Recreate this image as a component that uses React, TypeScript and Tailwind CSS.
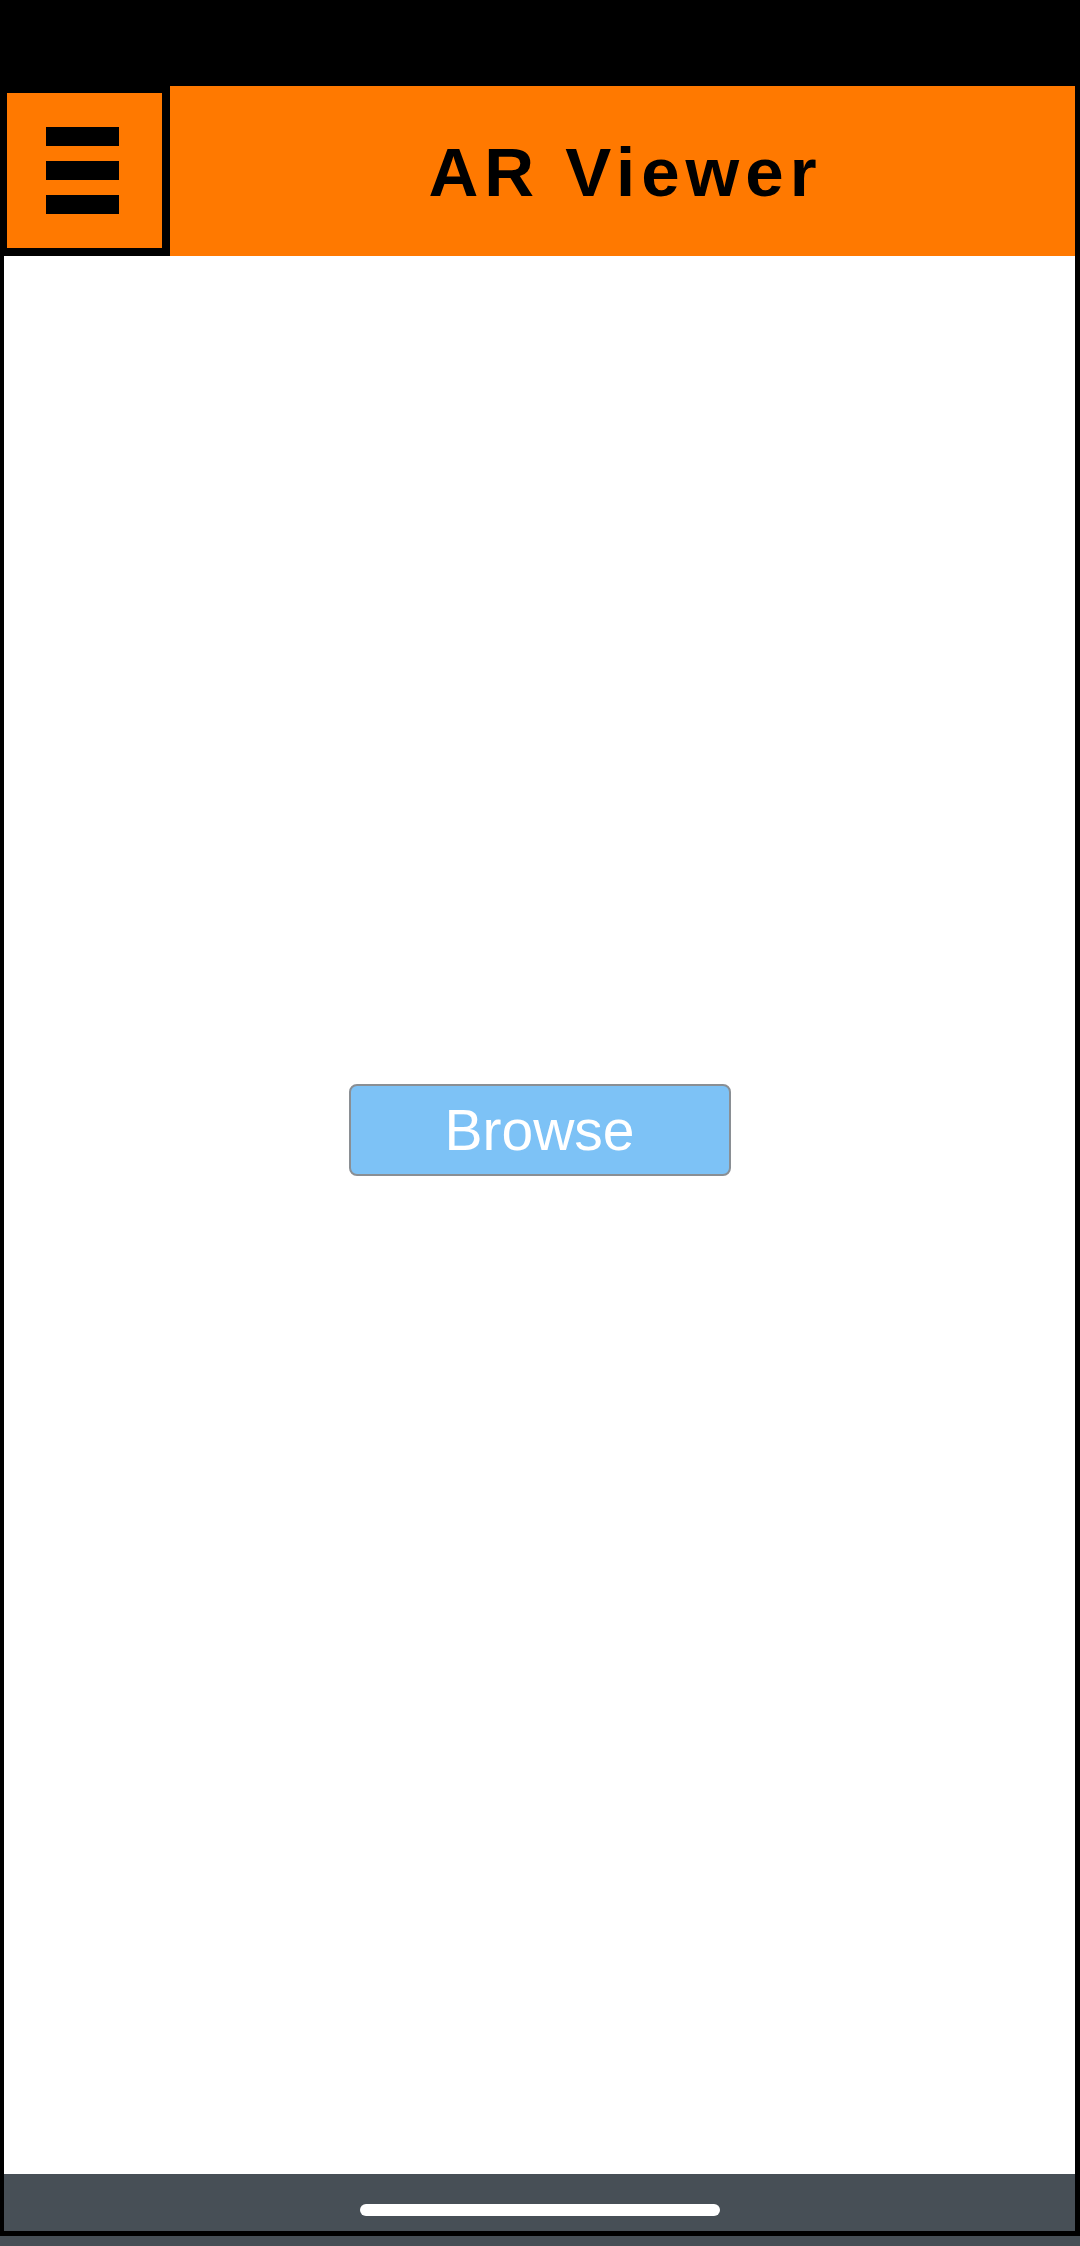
export default function App() {
  return (
    <div className="flex h-[2246px] w-[1080px] flex-col bg-black">
      {/* status bar */}
      <div className="h-[86px] shrink-0" />

      {/* header */}
      <header className="flex h-[170px] shrink-0 pr-[5px]">
        <button
          type="button"
          aria-label="Menu"
          className="h-full w-[170px] shrink-0 pb-[8px] pl-[7px] pr-[8px] pt-[7px]"
        >
          <span className="flex h-full w-full flex-col items-start justify-center gap-[15px] bg-[#ff7900] pl-[39px]">
            <span className="block h-[19px] w-[73px] bg-black" />
            <span className="block h-[19px] w-[73px] bg-black" />
            <span className="block h-[19px] w-[73px] bg-black" />
          </span>
        </button>
        <div className="flex flex-1 items-center justify-center bg-[#ff7900]">
          <h1 className="pl-[6px] pt-[2px] text-[69px] font-bold leading-none tracking-[6px] text-black [font-family:'Liberation_Sans',Arial,sans-serif]">
            AR Viewer
          </h1>
        </div>
      </header>

      {/* content */}
      <main className="ml-[4px] mr-[5px] flex flex-1 justify-center bg-white pt-[828px]">
        <button
          type="button"
          className="flex h-[92px] w-[382px] items-center justify-center rounded-[8px] border-2 border-[#8a8f94] bg-[#7dc2f6] text-[57px] leading-none text-white [font-family:'Liberation_Sans',Arial,sans-serif]"
        >
          Browse
        </button>
      </main>

      {/* nav bar */}
      <div className="ml-[4px] mr-[5px] flex h-[57px] shrink-0 justify-center bg-[#474f56] pt-[30px]">
        <div className="h-[12px] w-[360px] rounded-full bg-white" />
      </div>
      <div className="h-[5px] shrink-0" />
      <div className="h-[10px] shrink-0 bg-[#474f56]" />
    </div>
  );
}
